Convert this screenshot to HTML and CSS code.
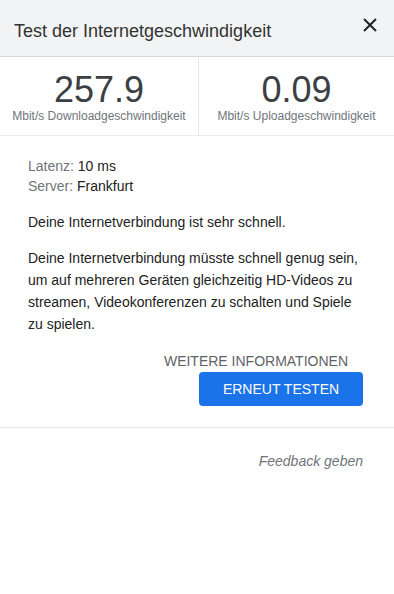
FILE: index.html
```html
<!DOCTYPE html><html><head><meta charset="utf-8">
<meta name="viewport" content="initial-scale=1.0, width=device-width">
<title>Test der Internetgeschwindigkeit</title>
<link rel="stylesheet" href="styles.css">
</head>
<body>
<div class="head">
  <h1>Test der Internetgeschwindigkeit</h1>
  <button type="button" class="close" aria-label="Schließen">
    <svg viewBox="0 0 16 16" width="16" height="16"><path d="M2 2 L14 14 M14 2 L2 14" /></svg>
  </button>
</div>

<div class="stats">
  <div class="stat">
    <div class="num">257.9</div>
    <div class="unit">Mbit/s Downloadgeschwindigkeit</div>
  </div>
  <div class="stat">
    <div class="num">0.09</div>
    <div class="unit">Mbit/s Uploadgeschwindigkeit</div>
  </div>
</div>

<div class="body">
  <div class="meta"><span class="key">Latenz:</span> 10 ms</div>
  <div class="meta"><span class="key">Server:</span> Frankfurt</div>
  <p class="lead">Deine Internetverbindung ist sehr schnell.</p>
  <p>Deine Internetverbindung müsste schnell genug sein, um auf mehreren Geräten gleichzeitig HD-Videos zu streamen, Videokonferenzen zu schalten und Spiele zu spielen.</p>
  <div class="actions">
    <a class="more">Weitere Informationen</a>
    <button type="button" class="retry">Erneut testen</button>
  </div>
</div>

<div class="foot"><a>Feedback geben</a></div>
</body>
</html>
```

FILE: styles.css
```css
html,body,div,h1,p{margin:0;padding:0;}
*{box-sizing:border-box;}
body{
  color:#222;
  font-size:14px;
  font-family:"Liberation Sans",Arial,sans-serif;
  background:#fff;
}
.head{
  height:57px;
  background:#f1f3f4;
  border-bottom:1px solid #d6d8da;
  display:flex;
  align-items:center;
  padding:0 0 0 14px;
}
.head h1{
  flex:1;
  font-size:18px;
  font-weight:normal;
  color:#333;
  padding-top:6px;
}
.close{
  border:0;
  background:none;
  padding:0;
  margin:0 16px 6px 0;
  width:16px;height:16px;
  display:flex;
}
.close svg{stroke:#222;stroke-width:2;fill:none;}
.stats{
  display:grid;
  grid-template-columns:198px 1fr;
  border-bottom:1px solid #ececec;
}
.stat{
  text-align:center;
  padding:13px 0 12px 0;
}
.stat + .stat{border-left:1px solid #e6e6e6;}
.num{
  font-size:36px;
  line-height:40px;
  color:#3c4043;
}
.unit{
  font-size:12px;
  line-height:14px;
  color:#70757a;
  margin-top:-1px;
}
.body{
  padding:20px 31px 0 28px;
}
.meta{line-height:20px;}
.key{color:#70757a;}
.body p{line-height:22px;}
.lead{margin-top:15px;}
.lead + p{margin-top:14px;}
.actions{
  display:flex;
  flex-direction:column;
  align-items:flex-end;
  margin-top:16px;
}
.more{
  color:#5f6368;
  text-transform:uppercase;
  line-height:20px;
  margin-right:15px;
}
.retry{
  margin-top:1px;
  width:164px;
  height:34px;
  border:0;
  border-radius:4px;
  background:#1a73e8;
  color:#fff;
  font-family:inherit;
  font-size:14px;
  text-transform:uppercase;
}
.foot{
  margin-top:21px;
  border-top:1px solid #e8e8e8;
  padding:23px 31px 0 0;
  text-align:right;
}
.foot a{
  font-style:italic;
  color:#70757a;
  line-height:20px;
}
```
